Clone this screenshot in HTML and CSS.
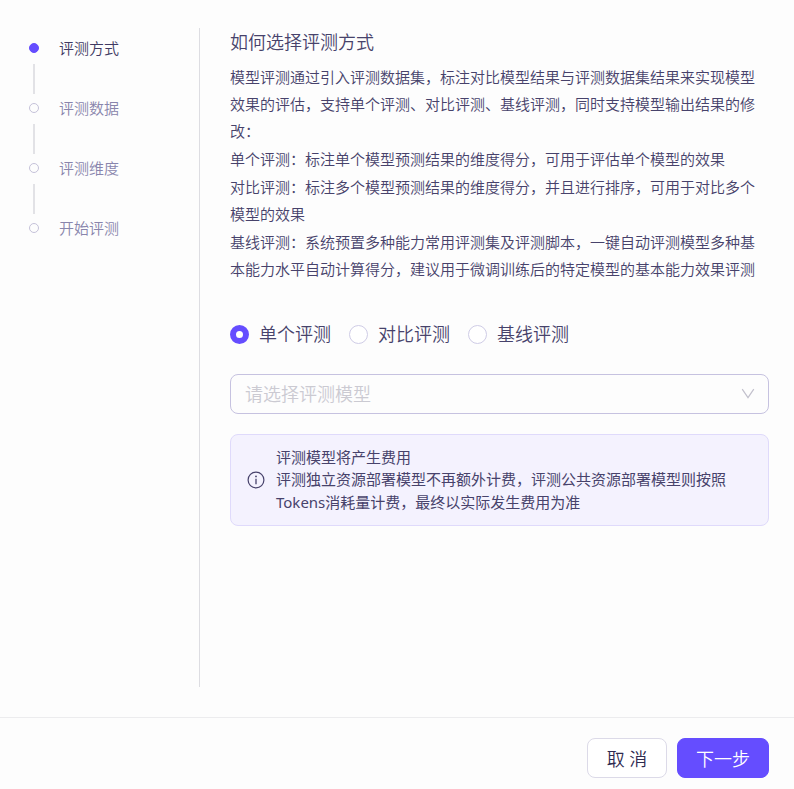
FILE: index.html
```html
<!DOCTYPE html>
<html lang="zh-CN">
<head>
<meta charset="utf-8">
<meta name="viewport" content="width=device-width, initial-scale=1">
<title>模型评测</title>
<link rel="stylesheet" href="styles.css">
</head>
<body>
<form class="page">
  <div class="body">
    <nav class="sidebar" aria-label="评测步骤">
      <ol class="steps">
        <li class="step step-active" aria-current="step"><span class="marker"></span><span class="step-title">评测方式</span></li>
        <li class="step"><span class="marker"></span><span class="step-title">评测数据</span></li>
        <li class="step"><span class="marker"></span><span class="step-title">评测维度</span></li>
        <li class="step"><span class="marker"></span><span class="step-title">开始评测</span></li>
      </ol>
    </nav>
    <main class="content">
      <h1 class="title">如何选择评测方式</h1>
      <div class="intro">
        <p>模型评测通过引入评测数据集，标注对比模型结果与评测数据集结果来实现模型效果的评估，支持单个评测、对比评测、基线评测，同时支持模型输出结果的修改：</p>
        <p>单个评测：标注单个模型预测结果的维度得分，可用于评估单个模型的效果</p>
        <p>对比评测：标注多个模型预测结果的维度得分，并且进行排序，可用于对比多个模型的效果</p>
        <p>基线评测：系统预置多种能力常用评测集及评测脚本，一键自动评测模型多种基本能力水平自动计算得分，建议用于微调训练后的特定模型的基本能力效果评测</p>
      </div>
      <div class="radios" role="radiogroup" aria-label="评测方式">
        <label class="radio"><input type="radio" name="mode" checked>单个评测</label>
        <label class="radio"><input type="radio" name="mode">对比评测</label>
        <label class="radio"><input type="radio" name="mode">基线评测</label>
      </div>
      <div class="select">
        <select aria-label="评测模型">
          <option>请选择评测模型</option>
        </select>
        <svg class="chevron" width="14" height="12" viewBox="0 0 14 12" aria-hidden="true"><path d="M1.2 1.2 7 9.6l5.8-8.4" fill="none" stroke="currentColor" stroke-width="1.2"/></svg>
      </div>
      <section class="notice">
        <svg class="info" width="18" height="18" viewBox="0 0 18 18" aria-hidden="true"><circle cx="9" cy="9" r="7.9" fill="none" stroke="currentColor" stroke-width="1.2"/><circle cx="9" cy="5.4" r=".9" fill="currentColor"/><path d="M9 7.7v5.6" stroke="currentColor" stroke-width="1.3"/></svg>
        <div class="notice-text">
          <p class="notice-title">评测模型将产生费用</p>
          <p>评测独立资源部署模型不再额外计费，评测公共资源部署模型则按照Tokens消耗量计费，最终以实际发生费用为准</p>
        </div>
      </section>
    </main>
  </div>
  <footer class="footer">
    <button class="button" type="button">取 消</button>
    <button class="button button-primary" type="button">下一步</button>
  </footer>
</form>
</body>
</html>
```
FILE: styles.css
```css
*,
*::before,
*::after {
  box-sizing: border-box;
}

body,
h1,
p,
ol {
  margin: 0;
  padding: 0;
}

body {
  background: #fdfdfd;
  color: #47426b;
  font-family: "Noto Sans", "Noto Sans CJK SC", sans-serif;
  font-size: 15px;
  font-weight: 350;
}

.page {
  display: flex;
  flex-direction: column;
  min-height: 100vh;
}

.body {
  display: flex;
  flex: 1;
  padding: 28px 25px 30px 0;
}

.sidebar {
  flex: 0 0 200px;
  border-right: 1px solid #dddde2;
}

.steps {
  padding: 9px 0 0 29px;
  list-style: none;
}

.step {
  display: flex;
  gap: 20px;
  height: 60px;
  color: #8985ac;
  line-height: 22px;
}

.step-active {
  color: #3f3a63;
}

.marker {
  display: flex;
  flex-direction: column;
  align-items: center;
  gap: 11px;
  padding-top: 6px;
}

.marker::before {
  content: "";
  width: 10px;
  height: 10px;
  border: 1px solid #c5c2d9;
  border-radius: 50%;
}

.step-active .marker::before {
  border-color: #654dff;
  background: #654dff;
}

.step:not(:last-child) .marker::after {
  content: "";
  width: 2px;
  height: 30px;
  background: #e2e2e6;
}

.content {
  flex: 1;
  min-width: 0;
  padding-left: 30px;
}

.title {
  font-size: 18px;
  font-weight: inherit;
  line-height: 28px;
}

.intro {
  display: grid;
  gap: 1px;
  margin-top: 8px;
  line-height: 27px;
}

.radios {
  display: flex;
  flex-wrap: wrap;
  gap: 18px;
  margin-top: 37px;
  font-size: 18px;
  line-height: 28px;
}

.radio {
  display: flex;
  align-items: center;
  gap: 10px;
}

.radio input {
  appearance: none;
  width: 19px;
  height: 19px;
  margin: 0;
  border: 1px solid #cfcce6;
  border-radius: 50%;
  background: #fff;
}

.radio input:checked {
  border: 6px solid #654dff;
}

.select {
  display: grid;
  align-items: center;
  margin-top: 26px;
}

.select select,
.chevron {
  grid-area: 1 / 1;
}

.select select {
  appearance: none;
  width: 100%;
  height: 40px;
  padding: 0 40px 0 14px;
  border: 1px solid #c6c2e0;
  border-radius: 8px;
  background: #fdfdfd;
  color: #cbcad2;
  font: inherit;
  font-size: 18px;
}

.chevron {
  justify-self: end;
  margin-right: 14px;
  color: #c2c0cc;
  pointer-events: none;
}

.notice {
  display: flex;
  align-items: center;
  gap: 11px;
  margin-top: 20px;
  padding: 11px 16px;
  border: 1px solid #dfdafb;
  border-radius: 8px;
  background: #f4f2fe;
  font-weight: 400;
  line-height: 23px;
}

.info {
  flex: none;
}

.notice-title {
  line-height: 22px;
}

.footer {
  display: flex;
  justify-content: flex-end;
  gap: 10px;
  padding: 20px 25px 11px;
  border-top: 1px solid #ececee;
}

.button {
  min-width: 80px;
  height: 40px;
  padding: 0 18px;
  border: 1px solid #dcdae8;
  border-radius: 8px;
  background: #fff;
  color: #2f2b50;
  font: inherit;
  font-size: 18px;
}

.button-primary {
  border-color: #654dff;
  background: #654dff;
  color: #fff;
}
```
